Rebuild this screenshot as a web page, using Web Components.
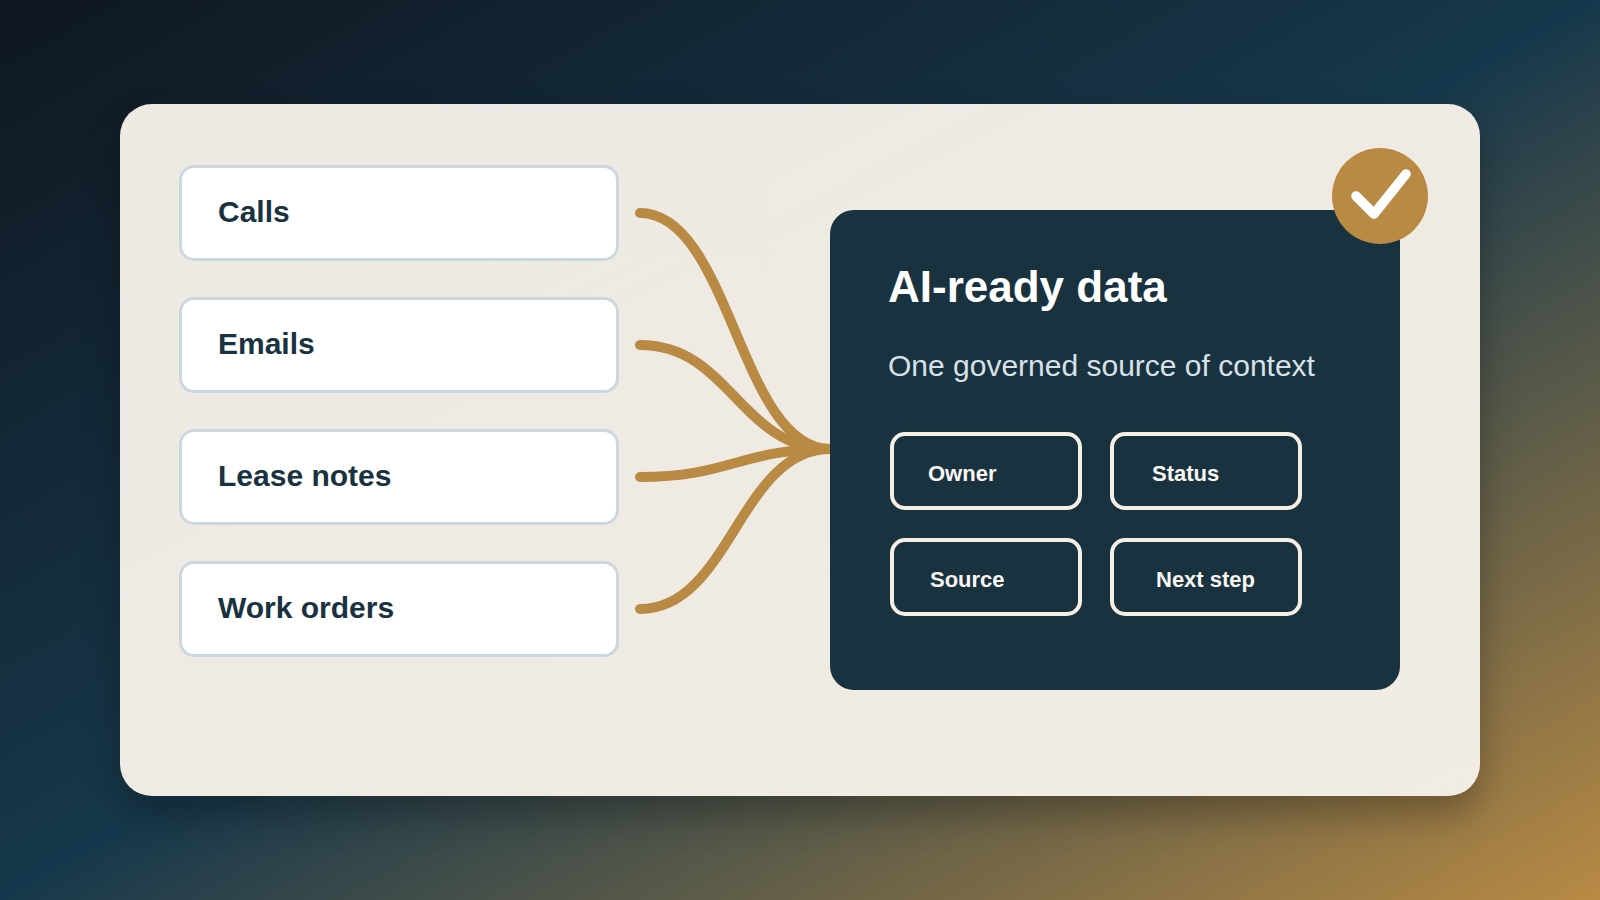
<!DOCTYPE html>
<html lang="en">
<head>
<meta charset="utf-8">
<title>AI-ready data</title>
<style>
  html, body { margin: 0; padding: 0; }
  body { font-family: "Liberation Sans", Arial, sans-serif; }
</style>
</head>
<body>
<data-scene>
  <source-list slot="sources">
    <source-row>Calls</source-row>
    <source-row>Emails</source-row>
    <source-row>Lease notes</source-row>
    <source-row>Work orders</source-row>
  </source-list>
  <flow-lines slot="flow"></flow-lines>
  <data-panel slot="panel" heading="AI-ready data" note="One governed source of context">
    <field-chip inset="34">Owner</field-chip>
    <field-chip inset="38">Status</field-chip>
    <field-chip inset="36">Source</field-chip>
    <field-chip inset="42">Next step</field-chip>
  </data-panel>
</data-scene>

<script>
class DataScene extends HTMLElement {
  constructor() {
    super();
    this.attachShadow({ mode: 'open' });
    this.shadowRoot.innerHTML = `
      <style>
        :host { display: block; width: 1600px; height: 900px; box-sizing: border-box; padding: 104px 120px; overflow: hidden;
          background: linear-gradient(to bottom right, #0f1720 0%, #17384c 50%, #b88a44 100%); }
        .card { height: 692px; box-sizing: border-box; padding: 61px 0 0 59px; border-radius: 32px;
          background: linear-gradient(to bottom right, #edeae3, #f1ece4);
          box-shadow: 0 18px 36px rgba(0,0,0,.28);
          display: grid; grid-template-columns: 440px 211px 570px; align-items: start; }
      </style>
      <div class="card">
        <slot name="sources"></slot>
        <slot name="flow"></slot>
        <slot name="panel"></slot>
      </div>`;
  }
}

class SourceList extends HTMLElement {
  constructor() {
    super();
    this.attachShadow({ mode: 'open' });
    this.shadowRoot.innerHTML = `
      <style>:host { display: flex; flex-direction: column; gap: 36px; }</style>
      <slot></slot>`;
  }
}

class SourceRow extends HTMLElement {
  constructor() {
    super();
    this.attachShadow({ mode: 'open' });
    this.shadowRoot.innerHTML = `
      <style>
        :host { display: flex; align-items: center; height: 96px; box-sizing: border-box; padding: 0 0 2px 36px;
          background: #fff; border: 3px solid #cdd7df; border-radius: 15px;
          font: 700 30px/36px "Liberation Sans", Arial, sans-serif; color: #19323f; }
      </style>
      <slot></slot>`;
  }
}

class FlowLines extends HTMLElement {
  constructor() {
    super();
    this.attachShadow({ mode: 'open' });
    // drawn from the row edge (x 0 = 619 on the page) into the panel edge
    this.shadowRoot.innerHTML = `
      <style>
        :host { display: block; height: 492px; }
        svg { display: block; overflow: visible; }
        path { fill: none; stroke: #b88a44; stroke-width: 10; stroke-linecap: round; }
      </style>
      <svg width="211" height="492" viewBox="619 165 211 492">
        <path d="M640 213 C730 213 740 449 830 449"/>
        <path d="M640 345 C730 345 740 449 830 449"/>
        <path d="M640 477 C730 477 740 449 830 449"/>
        <path d="M640 609 C730 609 740 449 830 449"/>
      </svg>`;
  }
}

class DataPanel extends HTMLElement {
  constructor() {
    super();
    this.attachShadow({ mode: 'open' });
    this.shadowRoot.innerHTML = `
      <style>
        :host { display: block; position: relative; height: 480px; margin-top: 45px; box-sizing: border-box; padding: 49px 0 0 58px;
          background: #19323f; border-radius: 24px; color: #fff; }
        h2 { margin: 0; font: 700 44px/56px "Liberation Sans", Arial, sans-serif; }
        p { margin: 32px 0 0; font: 400 30px/38px "Liberation Sans", Arial, sans-serif; color: #d8e1e7; }
        .fields { margin: 47px 0 0 2px; display: grid; grid-template-columns: 192px 192px; gap: 28px; }
        check-badge { position: absolute; left: 502px; top: -62px; }
      </style>
      <h2></h2>
      <p></p>
      <div class="fields"><slot></slot></div>
      <check-badge></check-badge>`;
  }
  connectedCallback() {
    this.shadowRoot.querySelector('h2').textContent = this.getAttribute('heading');
    this.shadowRoot.querySelector('p').textContent = this.getAttribute('note');
  }
}

class FieldChip extends HTMLElement {
  constructor() {
    super();
    this.attachShadow({ mode: 'open' });
    this.shadowRoot.innerHTML = `
      <style>
        :host { display: flex; align-items: center; height: 78px; box-sizing: border-box; padding-top: 6px;
          border: 4px solid #f5efe6; border-radius: 15px;
          font: 700 22px/28px "Liberation Sans", Arial, sans-serif; color: #f9f6f1; }
      </style>
      <slot></slot>`;
  }
  connectedCallback() {
    this.style.paddingLeft = this.getAttribute('inset') + 'px';
  }
}

class CheckBadge extends HTMLElement {
  constructor() {
    super();
    this.attachShadow({ mode: 'open' });
    this.shadowRoot.innerHTML = `
      <style>:host { display: block; width: 96px; height: 96px; } svg { display: block; }</style>
      <svg width="96" height="96" viewBox="0 0 96 96">
        <circle cx="48" cy="48" r="48" fill="#b88a44"/>
        <path d="M24 48 L42 66 L74 26" fill="none" stroke="#fff" stroke-width="9.6" stroke-linecap="round" stroke-linejoin="round"/>
      </svg>`;
  }
}

customElements.define('data-scene', DataScene);
customElements.define('source-list', SourceList);
customElements.define('source-row', SourceRow);
customElements.define('flow-lines', FlowLines);
customElements.define('data-panel', DataPanel);
customElements.define('field-chip', FieldChip);
customElements.define('check-badge', CheckBadge);
</script>
</body>
</html>
